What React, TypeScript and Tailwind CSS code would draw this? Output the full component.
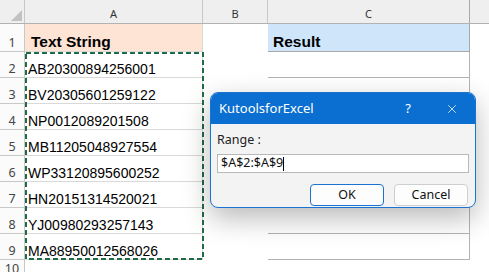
import { X } from "lucide-react";

const data = [
  "AB20300894256001",
  "BV20305601259122",
  "NP0012089201508",
  "MB11205048927554",
  "WP33120895600252",
  "HN20151314520021",
  "YJ00980293257143",
  "MA88950012568026",
];

const sheetFont = { fontFamily: '"Liberation Sans", Arial, sans-serif' };
const uiFont = { fontFamily: '"Noto Sans", "Open Sans", sans-serif' };

export default function App() {
  return (
    <div className="relative w-[489px] h-[272px] overflow-hidden bg-white" style={sheetFont}>
      {/* Column headers */}
      <div className="flex h-[24px] bg-[#efefef] border-b border-[#b3b3b3] text-[11px] leading-[14px] text-[#333]" style={uiFont}>
        <div className="relative w-[25px] shrink-0 border-r border-[#c8c8c8]">
          <svg width="25" height="24" className="absolute left-0 top-0">
            <polygon points="22,10 22,21 11,21" fill="#c2c2c2" />
          </svg>
        </div>
        <div className="w-[178px] shrink-0 border-r border-[#c8c8c8] text-center pt-[7px]">A</div>
        <div className="w-[65px] shrink-0 border-r border-[#c8c8c8] text-center pt-[7px]">B</div>
        <div className="w-[202px] shrink-0 border-r border-[#a8a8a8] text-center pt-[7px]">C</div>
        <div className="flex-1" />
      </div>

      {/* Row 1 */}
      <div className="flex h-[28px]">
        <div className="w-[25px] shrink-0 bg-[#fbfbfb] border-r border-b border-[#c8c8c8] flex items-end justify-center text-[12.5px] leading-[16px] text-[#444]" style={uiFont}>
          1
        </div>
        <div className="w-[178px] shrink-0 bg-[#fde4d5] border-r border-b border-[#d9d9d9] flex items-end pl-[6px] text-[15.5px] leading-[18px] font-bold text-black">
          Text String
        </div>
        <div className="w-[65px] shrink-0" />
        <div className="w-[202px] shrink-0 bg-[#cfe6fa] border-r border-b border-[#a8a8a8] flex items-end pl-[5px] text-[15.5px] leading-[18px] font-bold text-black">
          Result
        </div>
        <div className="flex-1" />
      </div>

      {/* Data rows */}
      {data.map((v, i) => (
        <div key={v} className="flex h-[26px]">
          <div className="w-[25px] shrink-0 bg-[#fbfbfb] border-r border-b border-[#c8c8c8] flex items-end justify-center text-[12.5px] leading-[16px] text-[#444]" style={uiFont}>
            {i + 2}
          </div>
          <div className="w-[178px] shrink-0 border-r border-b border-[#d9d9d9] flex items-end pl-[3px] text-[14px] leading-[16px] text-black">
            {v}
          </div>
          <div className="w-[65px] shrink-0" />
          <div className="w-[202px] shrink-0 border-r border-b border-[#b3b3b3]" />
          <div className="flex-1" />
        </div>
      ))}

      {/* Row 10 */}
      <div className="flex h-[20px]">
        <div className="w-[25px] shrink-0 bg-[#fbfbfb] border-r border-[#c8c8c8] flex justify-center pt-[1px] text-[12.5px] leading-[16px] text-[#444]" style={uiFont}>
          10
        </div>
      </div>

      {/* Copy selection marquee */}
      <svg className="absolute left-0 top-0 pointer-events-none" width="489" height="272">
        <rect x="26" y="53" width="177" height="206" fill="none" stroke="#1f6b45" strokeWidth="2" strokeDasharray="5 3" />
      </svg>

      {/* Dialog */}
      <div
        className="absolute left-[210px] top-[92px] w-[266px] h-[116px] rounded-[8px] border border-[#1a73d1] bg-[#f3f3f3] overflow-hidden shadow-[0_10px_28px_rgba(0,0,0,0.28)]"
        style={uiFont}
      >
        <div className="h-[31px] bg-[#0a6fd0] flex items-center pl-[8px] pr-[16px] text-white">
          <span className="text-[13px] flex-1">KutoolsforExcel</span>
          <span className="text-[13px] mr-[34px]">?</span>
          <X size={14} strokeWidth={1.3} />
        </div>
        <div className="px-[6px] pt-[8px]">
          <div className="text-[12.5px] leading-[16px] text-[#222]">Range :</div>
          <div className="mt-[6px] h-[19px] bg-white border border-[#b9b9b9] flex items-center pl-[3px] text-[12.5px] text-[#111]">
            $A$2:$A$9
            <span className="inline-block w-px h-[14px] bg-black" />
          </div>
          <div className="flex justify-end gap-[10px] mt-[11px] pr-[1px]">
            <button className="w-[74px] h-[22px] rounded-[4px] bg-[#fdfdfd] border border-[#1a73d1] text-[12.5px] text-[#111]">
              OK
            </button>
            <button className="w-[74px] h-[22px] rounded-[4px] bg-[#fdfdfd] border border-[#cfcfcf] text-[12.5px] text-[#111]">
              Cancel
            </button>
          </div>
        </div>
      </div>
    </div>
  );
}
